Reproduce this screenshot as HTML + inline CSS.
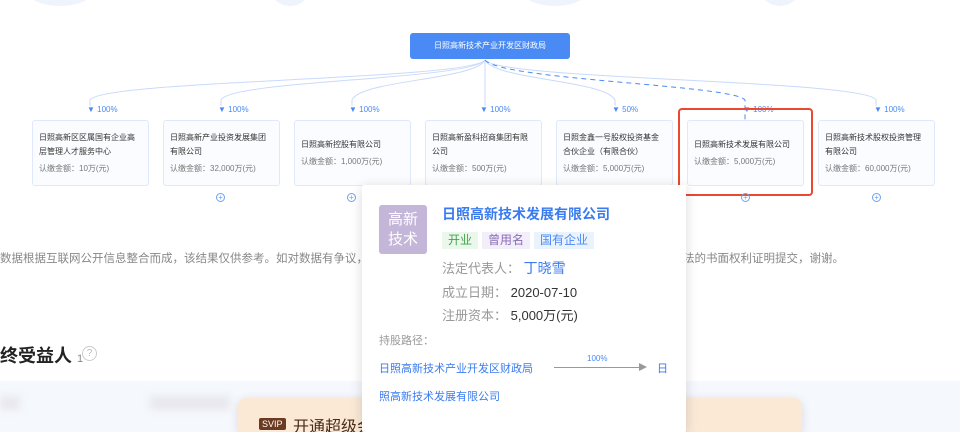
<!DOCTYPE html>
<html style="width:960px;height:432px;overflow:hidden"><head><meta charset="utf-8"><style>
*{margin:0;padding:0;box-sizing:border-box}
body{width:960px;height:432px;overflow:hidden;background:#fff;font-family:"Liberation Sans","Noto Sans CJK SC",sans-serif;position:relative}
.a{position:absolute}
.box{position:absolute;top:120px;width:117px;height:66px;border:1px solid #dfe9fb;border-radius:3px;background:#fbfcff;font-size:8px;color:#333;padding:0 6px;line-height:14px}
.box .n{margin-top:10px}
.box .m{color:#777;margin-top:3px}
.pct{position:absolute;top:105px;font-size:8px;color:#4a8af5}
.plus{position:absolute;top:193px;width:9px;height:9px;border:1px solid #6fa0f5;border-radius:50%;color:#6fa0f5;font-size:8px;line-height:7px;text-align:center}
.tag{display:inline-block;font-size:12px;padding:0 6px;height:17px;line-height:17px;margin-right:4px}
.row{font-size:13px;color:#999;position:absolute;left:442px}
.row b{font-weight:normal;color:#333}
</style></head><body>
<div class="a" style="left:25px;top:-30px;width:70px;height:36px;border-radius:50%;background:#eef3fc"></div>
<div class="a" style="left:270px;top:-30px;width:40px;height:36px;border-radius:50%;background:#eef3fc"></div>
<div class="a" style="left:520px;top:-30px;width:70px;height:36px;border-radius:50%;background:#eef3fc"></div>
<div class="a" style="left:760px;top:-30px;width:40px;height:36px;border-radius:50%;background:#eef3fc"></div>
<svg class="a" style="left:0;top:0" width="960" height="200">
<g fill="none" stroke="#c9dafb" stroke-width="1">
<path d="M485 60 C470 80 100 80 90 100 V106"/>
<path d="M485 60 C470 80 230 80 221 100 V106"/>
<path d="M485 60 C475 80 360 80 352 100 V106"/>
<path d="M485 60 V106"/>
<path d="M485 60 C495 80 605 80 615 100 V106"/>
<path d="M485 60 C500 80 870 80 876 100 V106"/>
</g>
<path d="M485 60 C500 80 735 85 745 100 V120" fill="none" stroke="#4a8af5" stroke-dasharray="5 4"/>
</svg>
<div class="a" style="left:410px;top:33px;width:160px;height:26px;background:#4a8af5;border-radius:3px;color:#fff;font-size:8px;text-align:center;line-height:26px">日照高新技术产业开发区财政局</div>
<div class="pct" style="left:87px">▼ 100%</div>
<div class="pct" style="left:218px">▼ 100%</div>
<div class="pct" style="left:349px">▼ 100%</div>
<div class="pct" style="left:480px">▼ 100%</div>
<div class="pct" style="left:612px">▼ 50%</div>
<div class="pct" style="left:743px">▼ 100%</div>
<div class="pct" style="left:874px">▼ 100%</div>
<div class="box" style="left:32px"><div class="n">日照高新区区属国有企业高层管理人才服务中心</div><div class="m">认缴金额：10万(元)</div></div>
<div class="box" style="left:163px"><div class="n">日照高新产业投资发展集团有限公司</div><div class="m">认缴金额：32,000万(元)</div></div>
<div class="box" style="left:294px"><div class="n" style="margin-top:17px">日照高新控股有限公司</div><div class="m">认缴金额：1,000万(元)</div></div>
<div class="box" style="left:425px"><div class="n">日照高新盈科招商集团有限公司</div><div class="m">认缴金额：500万(元)</div></div>
<div class="box" style="left:556px"><div class="n">日照金鑫一号股权投资基金合伙企业（有限合伙）</div><div class="m">认缴金额：5,000万(元)</div></div>
<div class="box" style="left:687px"><div class="n" style="margin-top:17px">日照高新技术发展有限公司</div><div class="m">认缴金额：5,000万(元)</div></div>
<div class="box" style="left:818px"><div class="n">日照高新技术股权投资管理有限公司</div><div class="m">认缴金额：60,000万(元)</div></div>
<div class="a" style="left:678px;top:108px;width:135px;height:88px;border:2px solid #e8492f;border-radius:4px"></div>
<div class="plus" style="left:216px">+</div>
<div class="plus" style="left:347px">+</div>
<div class="plus" style="left:741px">+</div>
<div class="plus" style="left:872px">+</div>
<div class="a" style="left:0;top:250px;font-size:11.5px;color:#888;white-space:nowrap">数据根据互联网公开信息整合而成，该结果仅供参考。如对数据有争议，</div>
<div class="a" style="left:683px;top:250px;font-size:11.5px;color:#888;white-space:nowrap">法的书面权利证明提交，谢谢。</div>
<div class="a" style="left:0;top:342px;font-size:18px;font-weight:bold;color:#222;white-space:nowrap">终受益人 <span style="font-size:11px;font-weight:normal;color:#888">1</span></div>
<div class="a" style="left:82px;top:346px;width:15px;height:15px;border:1px solid #ccc;border-radius:50%;font-size:10px;color:#bbb;text-align:center;line-height:13px">?</div>
<div class="a" style="left:0;top:381px;width:960px;height:51px;background:#f5f8fd"></div>
<div class="a" style="left:0;top:396px;width:20px;height:14px;background:#e8e8ec;filter:blur(4px)"></div>
<div class="a" style="left:150px;top:396px;width:80px;height:14px;background:#e8e8ec;filter:blur(4px)"></div>
<div class="a" style="left:238px;top:398px;width:564px;height:34px;background:#fbe9d6;border-radius:8px 8px 0 0;box-shadow:0 2px 10px rgba(0,0,0,.12)"></div>
<div class="a" style="left:259px;top:418px;font-size:9px;color:#fff;background:#6b3a22;padding:0 3px;border-radius:2px;line-height:12px">SVIP</div>
<div class="a" style="left:293px;top:413px;font-size:16px;color:#4a2a1a;white-space:nowrap">开通超级会员</div>
<div class="a" style="left:362px;top:185px;width:324px;height:247px;background:#fff;box-shadow:0 2px 12px rgba(0,0,0,.15);border-radius:2px"></div>
<div class="a" style="left:379px;top:205px;width:48px;height:49px;background:#c4b6d9;border-radius:3px;color:#fff;font-size:15px;line-height:20px;text-align:center;padding-top:5px">高新<br>技术</div>
<div class="a" style="left:442px;top:204px;font-size:14px;font-weight:bold;color:#3a7cf0;white-space:nowrap">日照高新技术发展有限公司</div>
<div class="a" style="left:442px;top:231px;white-space:nowrap"><span class="tag" style="background:#eaf7ea;color:#3fa84a">开业</span><span class="tag" style="background:#f2effa;color:#8a6bb8">曾用名</span><span class="tag" style="background:#eaf2fe;color:#4a8af5">国有企业</span></div>
<div class="row" style="top:258px">法定代表人： <span style="color:#3a7cf0;font-size:14px">丁晓雪</span></div>
<div class="row" style="top:282px">成立日期： <b>2020-07-10</b></div>
<div class="row" style="top:305px">注册资本： <b>5,000万(元)</b></div>
<div class="a" style="left:379px;top:332px;font-size:11px;color:#999">持股路径：</div>
<div class="a" style="left:379px;top:360px;font-size:11px;color:#3a7cf0;white-space:nowrap">日照高新技术产业开发区财政局</div>
<div class="a" style="left:587px;top:354px;font-size:8px;color:#4a8af5">100%</div>
<div class="a" style="left:554px;top:367px;width:85px;height:1px;background:#999"></div>
<div class="a" style="left:639px;top:363px;width:0;height:0;border-left:8px solid #999;border-top:4px solid transparent;border-bottom:4px solid transparent"></div>
<div class="a" style="left:657px;top:360px;font-size:11px;color:#3a7cf0">日</div>
<div class="a" style="left:379px;top:388px;font-size:11px;color:#3a7cf0;white-space:nowrap">照高新技术发展有限公司</div>
</body></html>
